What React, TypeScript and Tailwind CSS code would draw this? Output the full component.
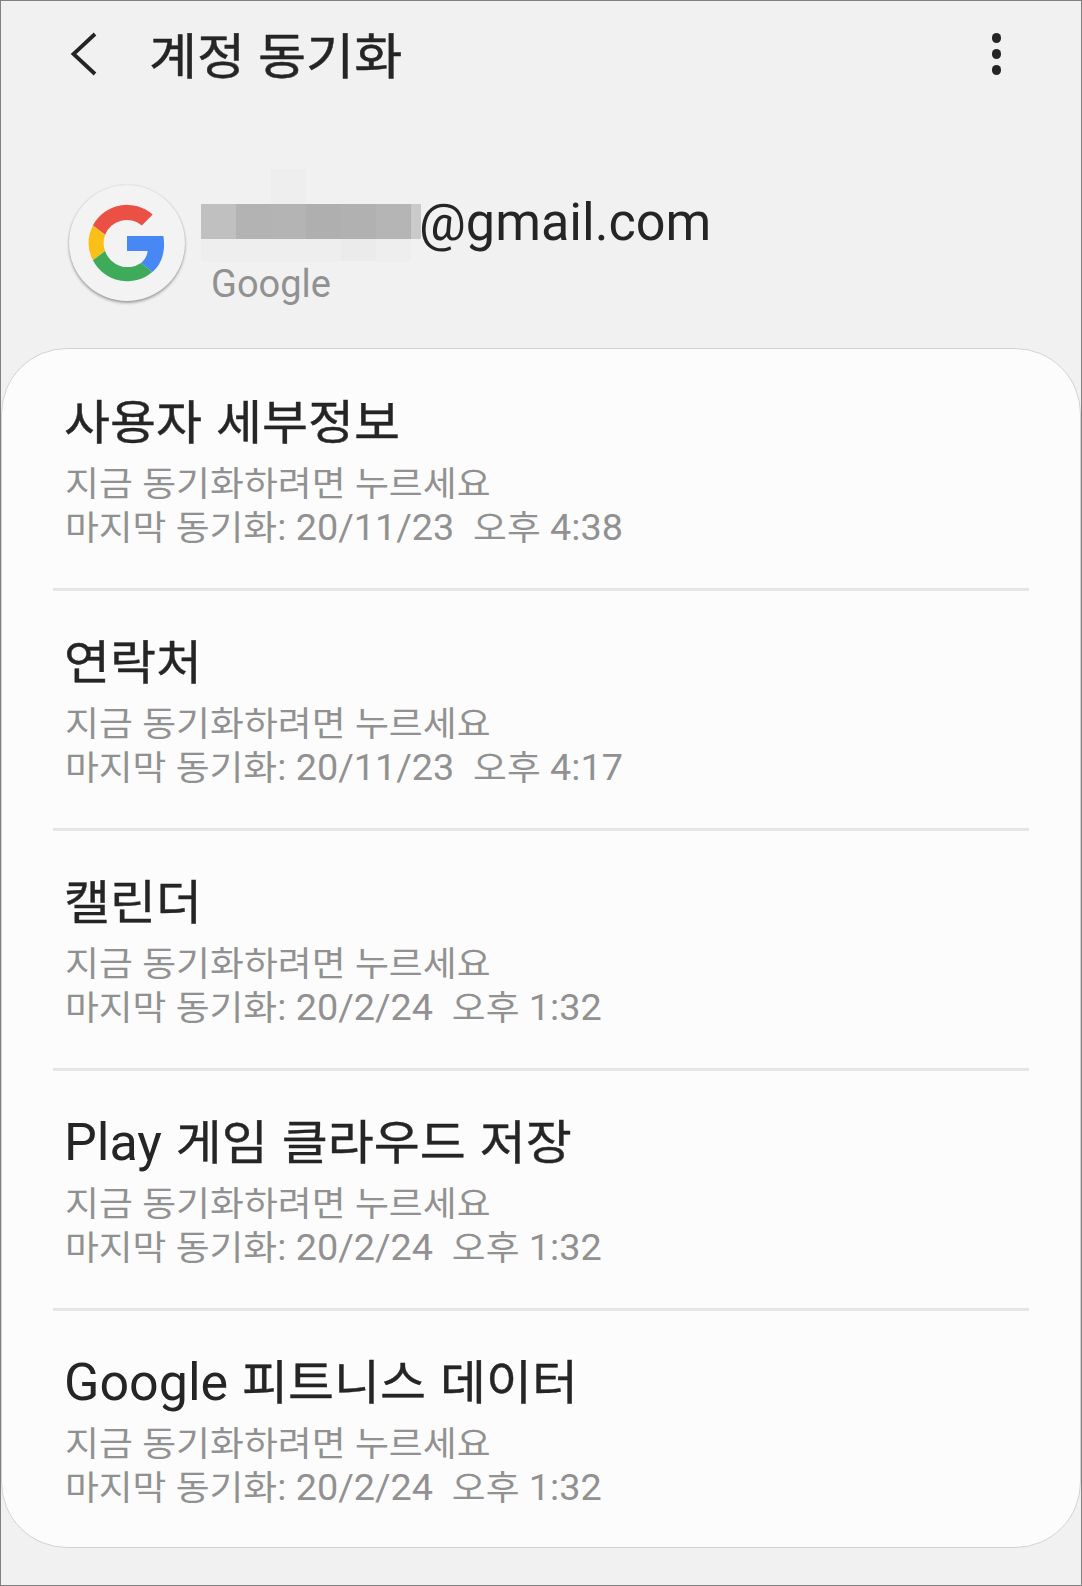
import React from 'react';

interface SyncItem {
  title: string;
  date: string;
  time: string;
}

const items: SyncItem[] = [
  { title: '사용자 세부정보', date: '20/11/23', time: '4:38' },
  { title: '연락처', date: '20/11/23', time: '4:17' },
  { title: '캘린더', date: '20/2/24', time: '1:32' },
  { title: 'Play 게임 클라우드 저장', date: '20/2/24', time: '1:32' },
  { title: 'Google 피트니스 데이터', date: '20/2/24', time: '1:32' },
];

//Blocks hiding the first part of the address
const blocks = [
  'w-[35px] bg-[#c0c0c0]',
  'w-[35px] bg-[#b3b3b3]',
  'w-[35px] bg-[#b4b4b4]',
  'w-[35px] bg-[#afafaf]',
  'w-[35px] bg-[#b1b1b1]',
  'w-[35px] bg-[#b5b5b5]',
  'w-[10px] bg-[#cacaca]',
];

//Hangul is set a little smaller than the Latin letters beside it
const Mixed = ({ text, className }: { text: string; className: string }) => (
  <>
    {text.split(/([가-힣]+)/).map((part, i) =>
      i % 2 === 1 ? (
        <span
          key={i}
          className={`inline-block origin-[50%_72%] scale-y-[0.94] ${className}`}
        >
          {part}
        </span>
      ) : (
        part
      )
    )}
  </>
);

const GoogleLogo = () => (
  <div className="flex h-[116px] w-[116px] items-center justify-center rounded-full bg-[#f3f3f3] shadow-[0_2px_3px_rgba(0,0,0,0.32),0_0_2px_rgba(0,0,0,0.15)]">
    <svg width="80" height="80" viewBox="-40 -40 80 80">
      <path
        fill="#ea5044"
        d="M-34.1 -17.5A38.7 38.7 0 0 1 25.7 -28.5L14.8 -17.6A23.3 23.3 0 0 0 -21.9 -8.2Z"
      />
      <path
        fill="#fac017"
        d="M-34.1 -17.5A38.7 38.7 0 0 0 -34.1 17.3L-21.9 8A23.3 23.3 0 0 1 -21.9 -8.2Z"
      />
      <path
        fill="#3dab59"
        d="M-34.1 17.3A38.7 38.7 0 0 0 25.3 29.1L14 20A23.8 23.8 0 0 1 -21.9 8Z"
      />
      <path
        fill="#4888f4"
        d="M0 -7H36.4C38.6 7 35.5 20.5 25.3 29.1L14 20C17.8 17 19.8 13.3 20.7 8H0Z"
      />
    </svg>
  </div>
);

const SyncRow = ({ item, last }: { item: SyncItem; last: boolean }) => (
  <li
    className={
      last
        ? 'h-[236px] pt-[41px] pl-[11px]'
        : 'h-[240px] border-b-[3px] border-[#e5e5e5] pt-[41px] pl-[11px]'
    }
  >
    <h2 className="h-[69px] text-[52px] leading-[62px] text-[#252525] [word-spacing:1px]">
      <Mixed
        text={item.title}
        className="-translate-y-px text-[0.962em] [-webkit-text-stroke:0.4px_#252525]"
      />
    </h2>
    <p className="h-[44px] pl-px text-[37.8px] leading-[44px] text-[#919191]">
      <Mixed text="지금 동기화하려면 누르세요" className="text-[0.975em]" />
    </p>
    <p className="h-[44px] pl-px text-[37.8px] leading-[44px] whitespace-pre text-[#919191]">
      <Mixed
        text={`마지막 동기화: ${item.date}  오후 ${item.time}`}
        className="text-[0.972em]"
      />
    </p>
  </li>
);

const App = () => {
  return (
    <div className="h-[1586px] w-[1082px] overflow-hidden border border-[#808080] bg-[#f1f1f1] font-[Roboto,'Noto_Sans_CJK_KR',sans-serif]">
      <header className="flex h-[106px] items-center pl-[68px]">
        <svg width="30" height="44" viewBox="0 0 30 44" fill="none">
          <path d="M26 2L4.5 22L26 42" stroke="#252525" strokeWidth="3.8" />
        </svg>
        <h1 className="ml-[50px] pt-1.5 text-[52px] leading-[62px] text-[#252525]">
          <Mixed
            text="계정 동기화"
            className="text-[1.005em] [-webkit-text-stroke:0.5px_#252525]"
          />
        </h1>
        <div className="mr-[80px] ml-auto flex flex-col gap-[6.5px]">
          <span className="h-[9.5px] w-[9.5px] rounded-full bg-[#252525]" />
          <span className="h-[9.5px] w-[9.5px] rounded-full bg-[#252525]" />
          <span className="h-[9.5px] w-[9.5px] rounded-full bg-[#252525]" />
        </div>
      </header>

      <section className="flex h-[241px] pl-[68px]">
        <div className="pt-[78px]">
          <GoogleLogo />
        </div>
        <div className="ml-4 pt-[62px]">
          <div className="flex h-[92px]">
            <div className="w-[218px]">
              <div className="ml-[70px] h-[35px] w-[35px] bg-[#eeeeee]" />
              <div className="flex h-[35px] w-[220px]">
                {blocks.map((block, i) => (
                  <div key={i} className={block} />
                ))}
              </div>
              <div className="flex h-[22px] w-[210px] justify-end bg-[#eeeeee] pr-[35px]">
                <div className="w-[35px] bg-[#ebebeb]" />
              </div>
            </div>
            <div className="pt-[23px] text-[52.2px] leading-[62px] text-[#252525]">
              @gmail.com
            </div>
          </div>
          <div className="pt-px pl-[10px] text-[38px] leading-[44px] text-[#919191]">
            Google
          </div>
        </div>
      </section>

      <main className="h-[1200px] rounded-[66px] border border-[#d3d3d3] bg-[#fcfcfc] pt-[2px] pr-[51px] pl-[51px]">
        <ul>
          {items.map((item, i) => (
            <SyncRow
              key={item.title}
              item={item}
              last={i === items.length - 1}
            />
          ))}
        </ul>
      </main>
    </div>
  );
};

export default App;
